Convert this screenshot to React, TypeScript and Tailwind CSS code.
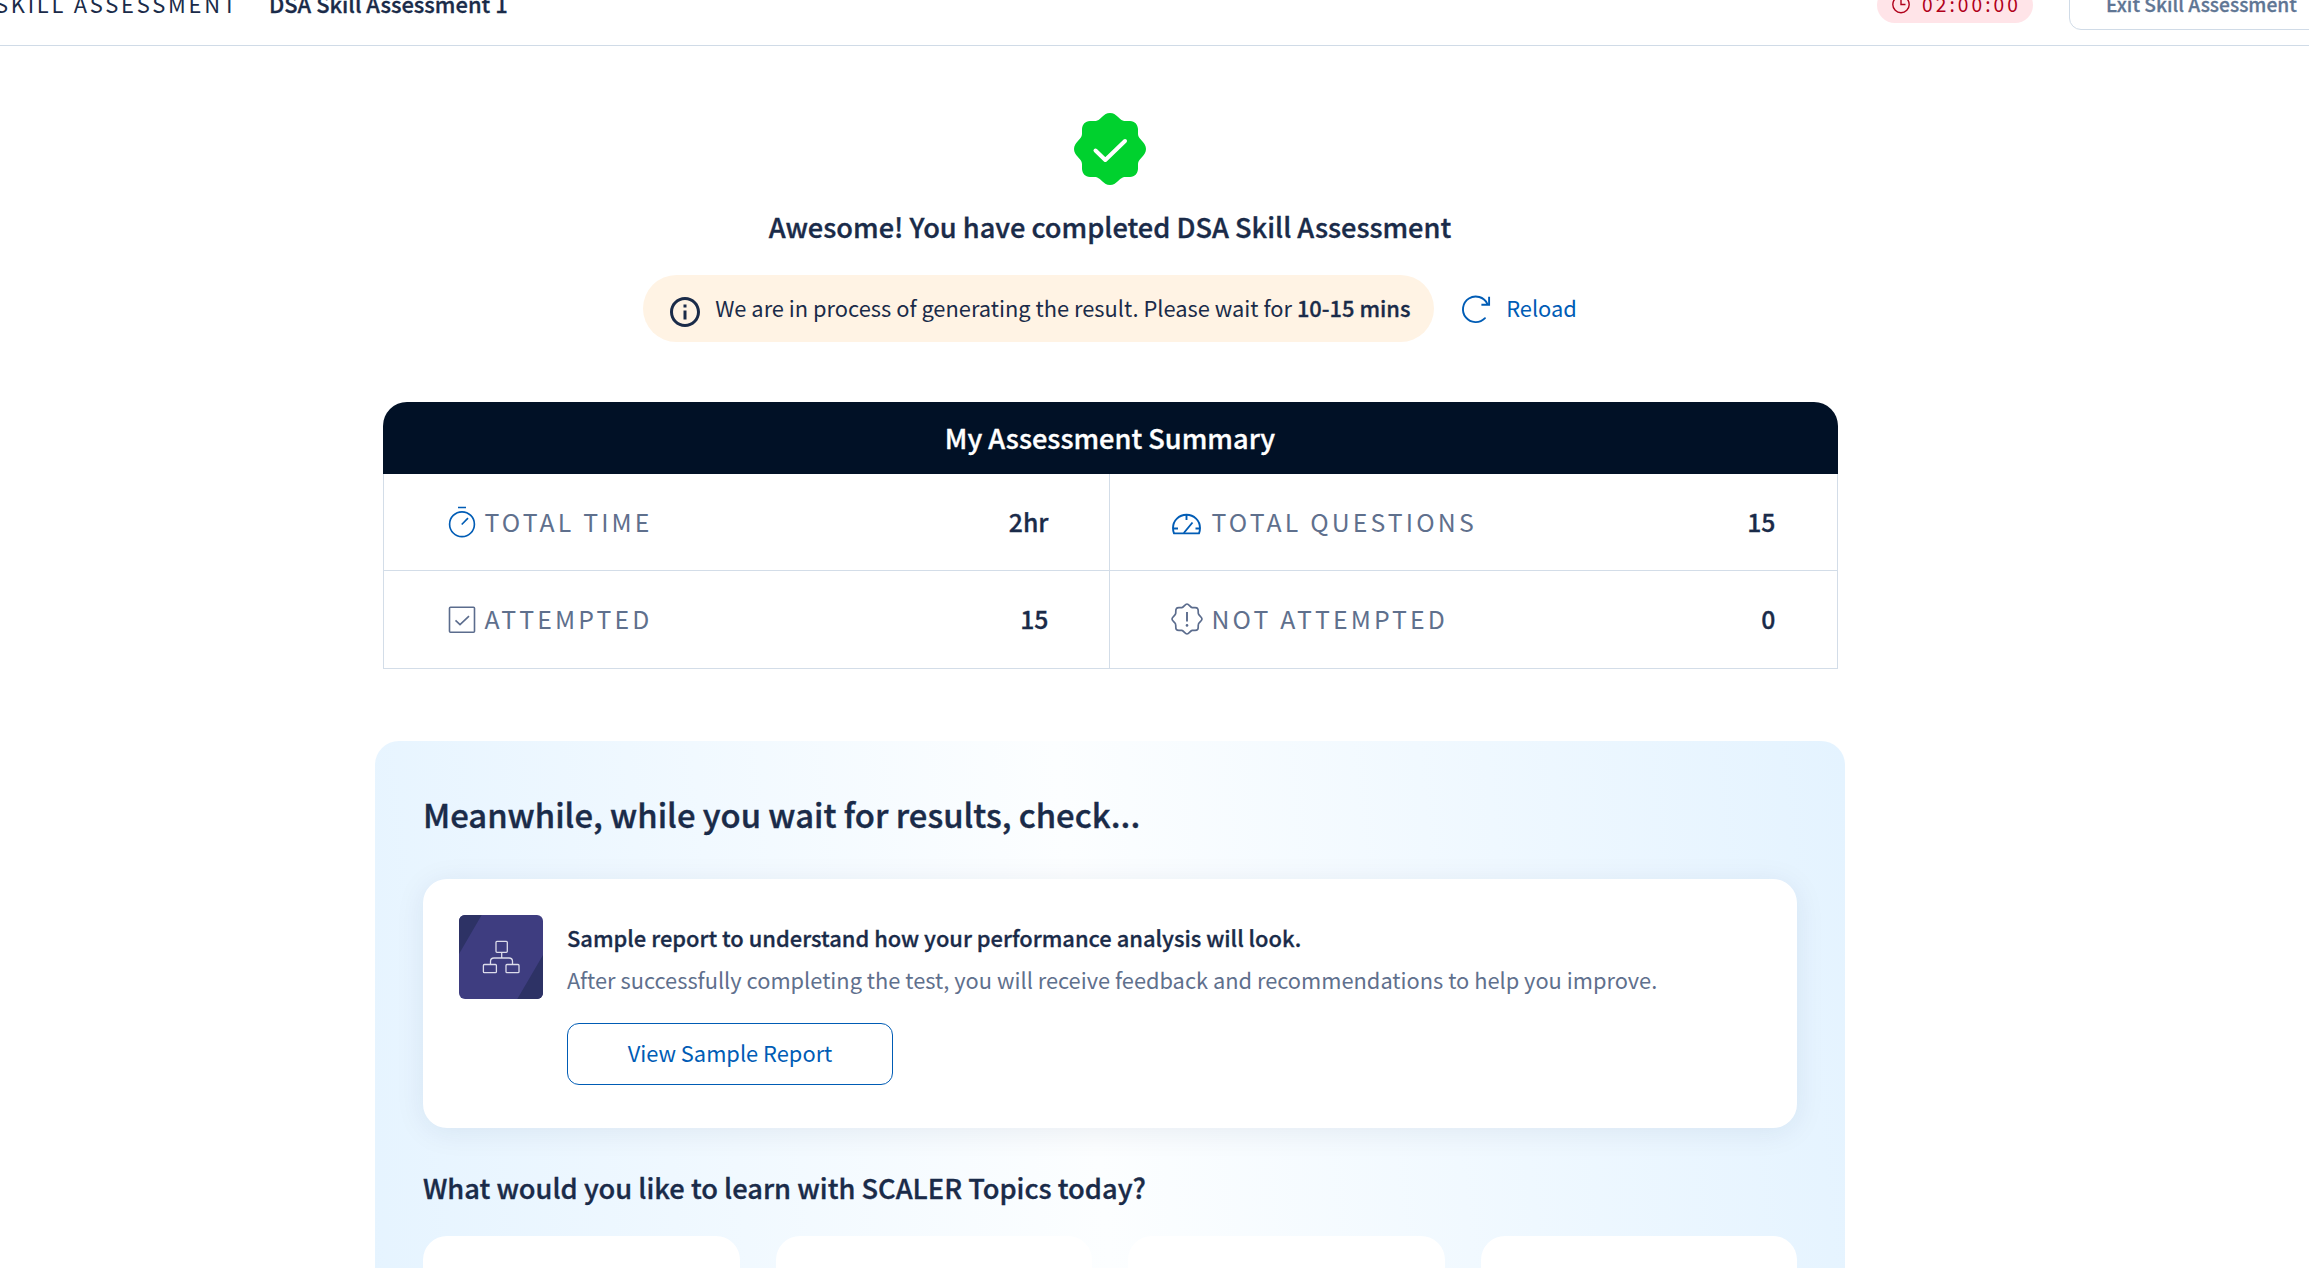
import React from "react";

function BadgeIcon() {
  return (
    <svg className="h-[72px] w-[72px]" viewBox="0 0 72 72" fill="none">
      <path
        fill="#00d12e"
        d="M36 0C39.500 0 41.500 1.800 43.500 3.500L46.200 5.900C47.900 7.400 49.500 8 51.500 8H56C61 8.500 63.500 11 64 16V20.500C64 22.500 64.600 24.100 66.100 25.800L68.500 28.500C70.200 30.500 72 32.500 72 36C72 39.500 70.200 41.500 68.500 43.500L66.100 46.200C64.600 47.900 64 49.500 64 51.500V56C63.500 61 61 63.500 56 64H51.500C49.500 64 47.900 64.600 46.200 66.100L43.500 68.500C41.500 70.200 39.500 72 36 72C32.500 72 30.500 70.200 28.500 68.500L25.800 66.100C24.100 64.600 22.500 64 20.500 64H16C11 63.500 8.500 61 8 56V51.500C8 49.500 7.400 47.900 5.900 46.200L3.500 43.500C1.800 41.500 0 39.500 0 36C0 32.500 1.800 30.500 3.500 28.500L5.900 25.800C7.400 24.100 8 22.500 8 20.500V16C8.500 11 11 8.500 16 8H20.500C22.500 8 24.100 7.400 25.800 5.900L28.500 3.500C30.500 1.800 32.500 0 36 0Z"
      />
      <path d="M21.500 37.500L31.300 47L51 28" stroke="#fff" strokeWidth="4" strokeLinecap="round" strokeLinejoin="round" />
    </svg>
  );
}

function InfoIcon() {
  return (
    <svg className="h-9 w-9" viewBox="0 0 24 24" fill="#1a2b49">
      <path d="M11 7h2v2h-2zm0 4h2v6h-2zm1-9C6.480 2 2 6.480 2 12s4.480 10 10 10 10-4.480 10-10S17.520 2 12 2zm0 18c-4.410 0-8-3.590-8-8s3.590-8 8-8 8 3.590 8 8-3.590 8-8 8z" />
    </svg>
  );
}

function ReloadIcon() {
  return (
    <svg className="h-[30px] w-[30px]" viewBox="0 0 30 30" fill="none" stroke="#005cb5" strokeWidth="1.900">
      <path d="M24 24.200A12.800 12.800 0 1 1 26.300 9.800" strokeLinecap="round" />
      <path d="M28.100 2.800V10.700H20.400" />
    </svg>
  );
}

function StopwatchIcon() {
  return (
    <svg className="h-8 w-7 shrink-0" viewBox="0 0 28 32" fill="none" stroke="#005cb5" strokeWidth="1.650">
      <circle cx="14" cy="18.200" r="12.400" />
      <path d="M10 1.500H18M13.700 18.500L20 12.200" />
    </svg>
  );
}

function CheckboxIcon() {
  return (
    <svg className="h-8 w-7 shrink-0" viewBox="0 0 28 32" fill="none" stroke="#5b6c8d" strokeWidth="1.600">
      <rect x="1.500" y="4.200" width="25" height="25" rx="1" />
      <path d="M7.500 17.400L12 21.600L21 13.200" />
    </svg>
  );
}

function GaugeIcon() {
  return (
    <svg className="h-8 w-8 shrink-0" viewBox="0 0 32 32" fill="none" stroke="#005cb5" strokeWidth="1.900" strokeLinejoin="round">
      <path d="M3 27.400H28C28.700 25.500 29 24 29 22C29 14.500 23 8.800 15.500 8.800S2 14.500 2 22C2 24 2.300 25.500 3 27.400Z" />
      <path d="M12.800 27L21.500 16.500M15.500 9V14M2.500 22.500H7M24.500 22.500H28.500" />
    </svg>
  );
}

function AlertBadgeIcon() {
  return (
    <svg className="h-8 w-8 shrink-0" viewBox="0 0 32 32" fill="none" stroke="#5b6c8d" strokeWidth="1.700" strokeLinejoin="round">
      <path d="M16 1C18 1 19.300 4.300 21.200 4.600C23 4.900 25.500 3.800 26.600 5.400C27.700 6.900 26.900 9.200 27.400 10.800C27.900 12.600 31 14 31 16C31 18 27.900 19.400 27.400 21.200C26.900 22.800 27.700 25.100 26.600 26.600C25.500 28.200 23 27.100 21.200 27.400C19.300 27.700 18 31 16 31C14 31 12.700 27.700 10.800 27.400C9 27.100 6.500 28.200 5.400 26.600C4.300 25.100 5.100 22.800 4.600 21.200C4.100 19.400 1 18 1 16C1 14 4.100 12.600 4.600 10.800C5.100 9.200 4.300 6.900 5.400 5.400C6.500 3.800 9 4.900 10.800 4.600C12.700 4.300 14 1 16 1Z" />
      <path d="M16 9V18.500" strokeWidth="1.900" />
      <circle cx="16" cy="22.400" r="1.300" fill="#5b6c8d" stroke="none" />
    </svg>
  );
}

function ReportThumb() {
  return (
    <svg className="h-[84px] w-[84px] shrink-0 rounded-md" viewBox="0 0 84 84" fill="none">
      <rect width="84" height="84" fill="#3e3d80" />
      <path d="M0 0H22.700L0 39ZM84 84H58.300L84 40Z" fill="#2d3265" />
      <g stroke="#dcdcea" strokeWidth="1.300">
        <rect x="37" y="26.300" width="11.300" height="11" rx="1" />
        <rect x="24.400" y="49.500" width="13" height="8.200" rx="1" />
        <rect x="47" y="49.500" width="13" height="8.200" rx="1" />
        <path d="M42.700 37.300V43M31.500 49.500V46.500Q31.500 43 35 43H50Q53.500 43 53.500 46.500V49.500" />
      </g>
    </svg>
  );
}

function SummaryCell({ icon, label, value, className }: { icon: React.ReactNode; label: string; value: string; className: string }) {
  return (
    <div className={className}>
      <div className="flex items-center gap-[9px]">
        {icon}
        <span className="text-[24.8px] tracking-[3.150px] text-[#5f708d]">{label}</span>
      </div>
      <span className="text-[24.8px] font-medium [-webkit-text-stroke:0.3px]">{value}</span>
    </div>
  );
}

export default function App() {
  return (
    <div className="h-[1268px] w-full overflow-hidden bg-white font-['Noto_Sans_CJK_SC','Noto_Sans',sans-serif] text-[#1a2b49]">
      <header className="-mt-9 -ml-[5px] flex h-[82px] w-[2340px] items-center justify-between border-b border-[#d0dbe7]">
        <div className="flex items-center pb-0.5 text-[21.9px] leading-9 whitespace-nowrap">
          <span className="w-[274px] tracking-[2.750px]">SKILL ASSESSMENT</span>
          <span className="font-medium [-webkit-text-stroke:0.3px]">DSA Skill Assessment 1</span>
        </div>
        <div className="flex items-center gap-9 text-[19.200px]">
          <div className="flex h-9 w-[156px] items-center rounded-full bg-[#ffe4e8] pl-[14px] text-[#b0001a]">
            <svg className="mr-[11px] h-5 w-5" viewBox="0 0 20 20" fill="none" stroke="currentColor" strokeWidth="1.400">
              <circle cx="10" cy="9.500" r="8.200" />
              <path d="M10 4V9.500H14.500" />
            </svg>
            <span className="pb-px leading-8 tracking-[3.050px]">02:00:00</span>
          </div>
          <button className="flex h-[50px] w-[266px] items-center rounded-xl border border-[#d0dbe7] pb-px pl-[36px] font-medium whitespace-nowrap text-[#5f7694] [-webkit-text-stroke:0.3px]">
            Exit Skill Assessment
          </button>
        </div>
      </header>

      <main className="ml-[375px] flex w-[1470px] flex-col items-center">
        <div className="mt-[67px]">
          <BadgeIcon />
        </div>
        <h1 className="mt-[23px] text-[27.200px] leading-9 font-medium whitespace-nowrap [-webkit-text-stroke:0.35px]">
          Awesome! You have completed DSA Skill Assessment
        </h1>

        <div className="mt-[31px] flex h-[67px] items-center">
          <div className="flex h-full w-[791px] items-center gap-3 rounded-full bg-[#fff3e4] pl-6">
            <div className="pt-[7px]">
              <InfoIcon />
            </div>
            <p className="pb-0.5 text-[21.850px] leading-9 whitespace-nowrap">
              We are in process of generating the result. Please wait for{" "}
              <span className="font-medium [-webkit-text-stroke:0.3px]">10-15 mins</span>
            </p>
          </div>
          <button className="ml-[27px] flex items-center gap-[15px] text-[21.850px] leading-9 text-[#005cb5]">
            <ReloadIcon />
            <span className="pb-0.5">Reload</span>
          </button>
        </div>

        <section className="mt-[60px] w-[1455px] overflow-hidden rounded-t-3xl">
          <h2 className="flex h-[72px] items-center justify-center bg-[#011126] pb-0.5 text-[27.200px] font-medium text-white [-webkit-text-stroke:0.35px]">
            My Assessment Summary
          </h2>
          <div className="grid grid-cols-[726px_728px] border-l border-[#d3dde8]">
            <SummaryCell
              icon={<StopwatchIcon />}
              label="TOTAL TIME"
              value="2hr"
              className="flex h-[97px] items-center justify-between border-r border-b border-[#d3dde8] pr-[60px] pb-px pl-16"
            />
            <SummaryCell
              icon={<GaugeIcon />}
              label="TOTAL QUESTIONS"
              value="15"
              className="flex h-[97px] items-center justify-between border-r border-b border-[#d3dde8] pr-[61px] pb-px pl-[61px]"
            />
            <SummaryCell
              icon={<CheckboxIcon />}
              label="ATTEMPTED"
              value="15"
              className="flex h-[98px] items-center justify-between border-r border-b border-[#d3dde8] pr-[60px] pb-0.5 pl-16"
            />
            <SummaryCell
              icon={<AlertBadgeIcon />}
              label="NOT ATTEMPTED"
              value="0"
              className="flex h-[98px] items-center justify-between border-r border-b border-[#d3dde8] pr-[61px] pb-0.5 pl-[61px]"
            />
          </div>
        </section>

        <section className="mt-[72px] h-[1054px] w-full shrink-0 rounded-t-3xl bg-[linear-gradient(84deg,#e4f3ff_0%,#fcfeff_50%,#e4f3ff_100%)] px-12 pt-[49px]">
          <h2 className="text-[32.800px] leading-[48px] font-medium [-webkit-text-stroke:0.4px]">
            Meanwhile, while you wait for results, check...
          </h2>
          <article className="mt-[41px] flex h-[249px] gap-6 rounded-3xl bg-white p-9 shadow-[0_4px_30px_rgba(10,40,90,0.08)]">
            <ReportThumb />
            <div className="flex flex-col items-start pt-[5px] whitespace-nowrap">
              <h3 className="text-[21.900px] leading-9 font-medium [-webkit-text-stroke:0.3px]">
                Sample report to understand how your performance analysis will look.
              </h3>
              <p className="mt-1.5 text-[21.820px] leading-9 text-[#5f708d]">
                After successfully completing the test, you will receive feedback and recommendations to help you improve.
              </p>
              <button className="mt-[25px] h-[62px] w-[326px] rounded-xl border border-[#005cb5] pb-px text-[21.850px] text-[#005cb5]">
                View Sample Report
              </button>
            </div>
          </article>
          <h3 className="mt-[41px] text-[27.250px] leading-9 font-medium [-webkit-text-stroke:0.35px]">
            What would you like to learn with SCALER Topics today?
          </h3>
          <div className="mt-[31px] grid grid-cols-4 gap-9">
            <div className="h-80 rounded-3xl bg-white" />
            <div className="h-80 rounded-3xl bg-white" />
            <div className="h-80 rounded-3xl bg-white" />
            <div className="h-80 rounded-3xl bg-white" />
          </div>
        </section>
      </main>
    </div>
  );
}
